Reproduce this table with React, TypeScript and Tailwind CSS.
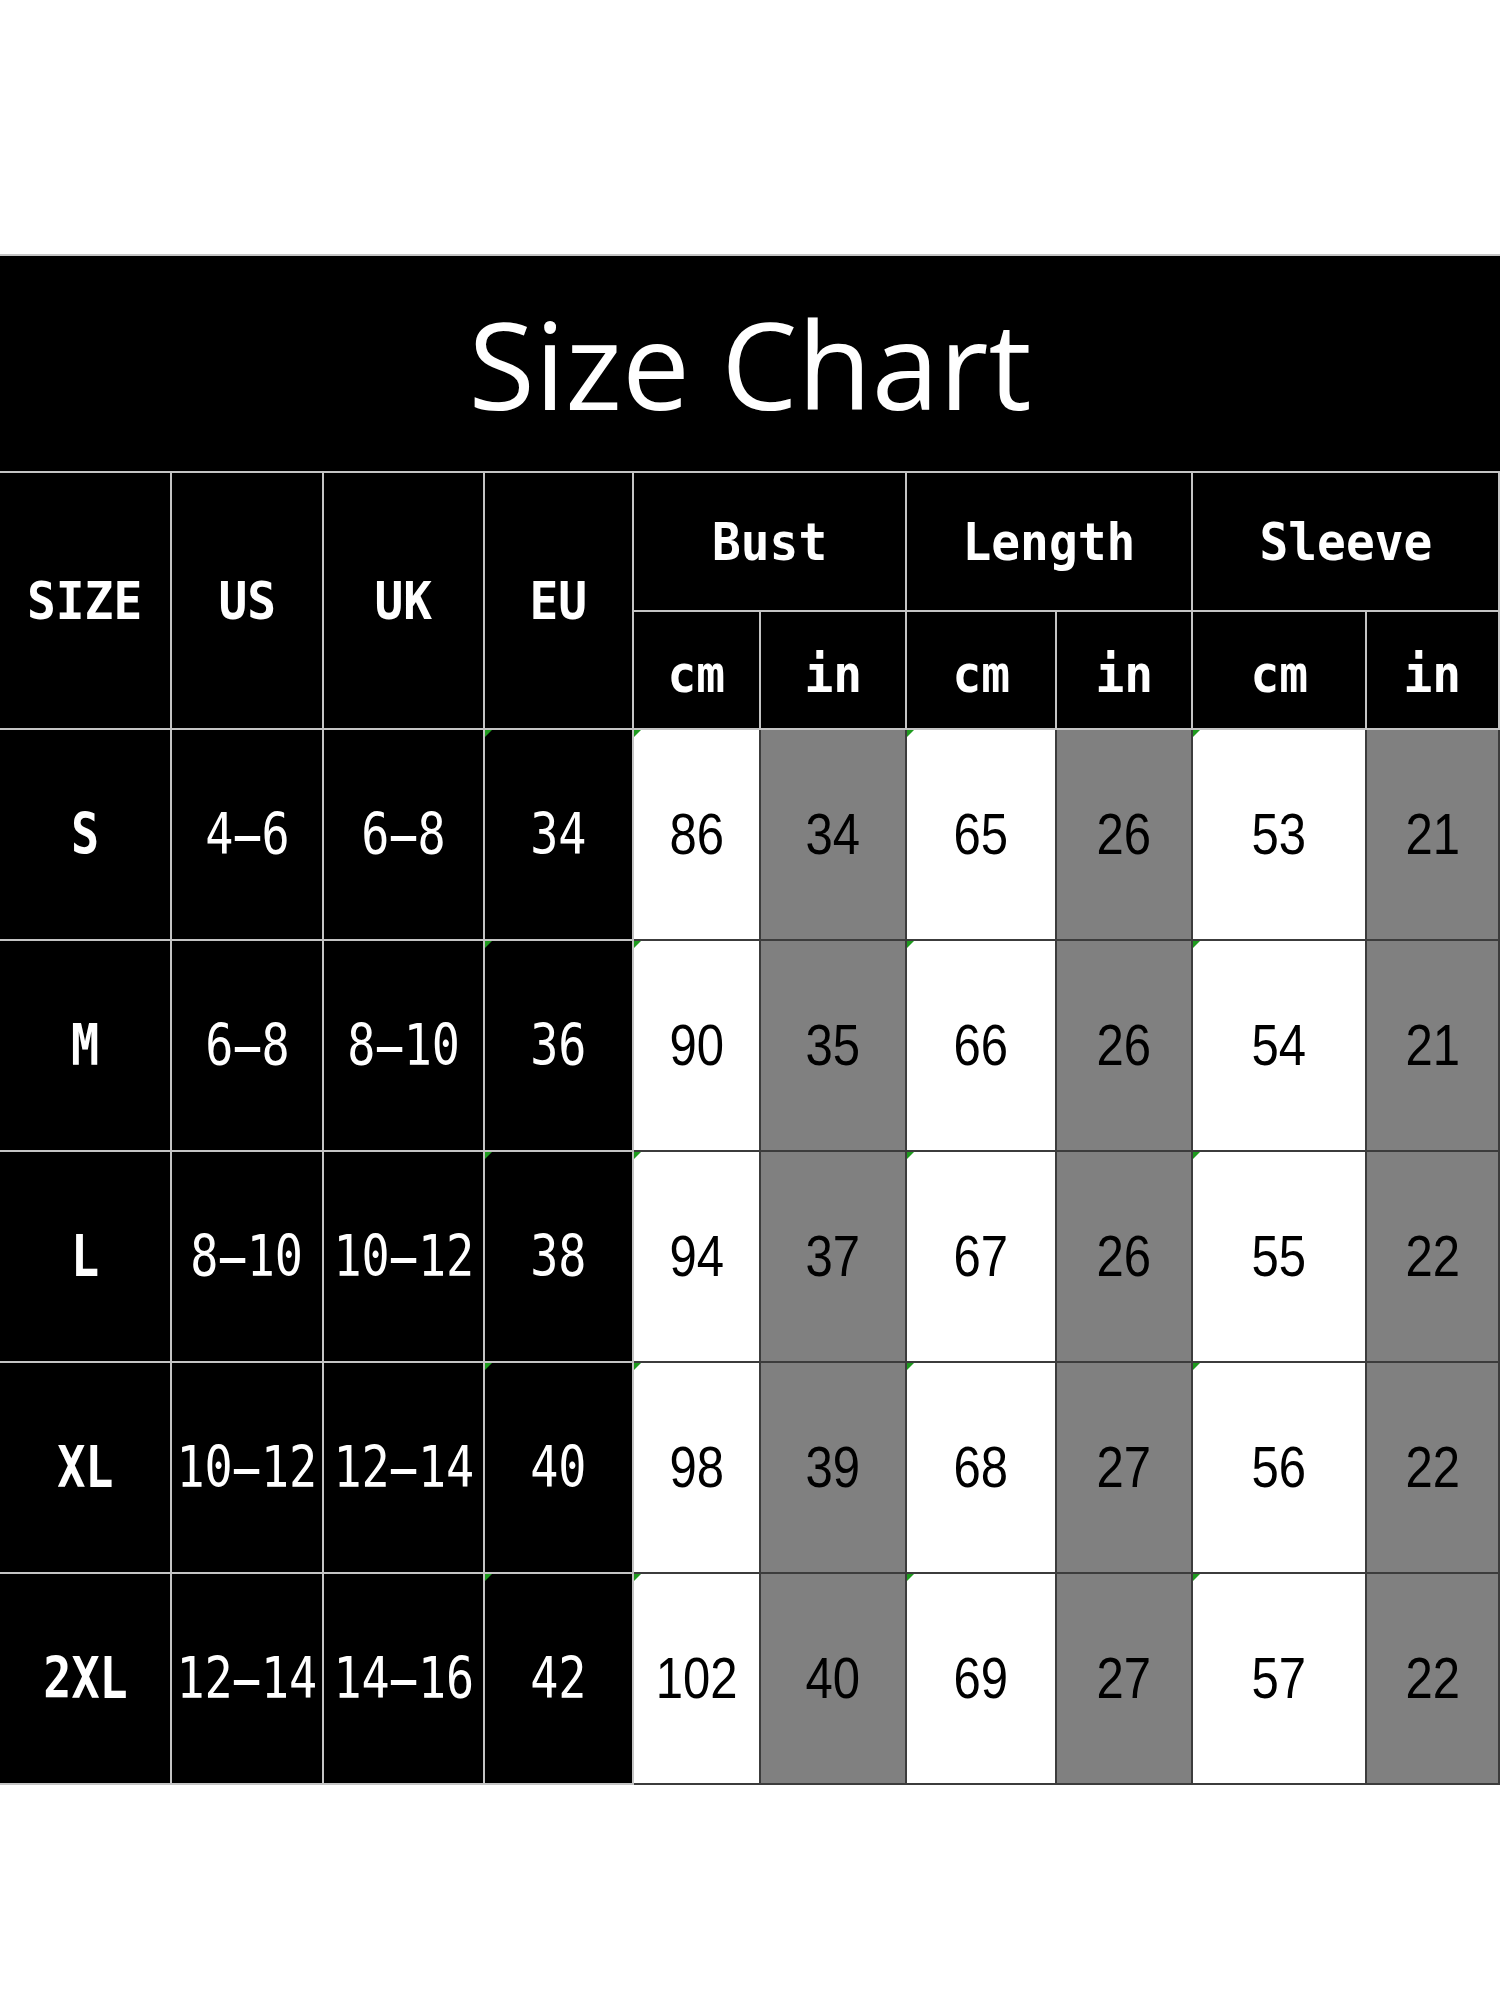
import React from 'react';

const rows = [
  ['S', '4-6', '6-8', '34', '86', '34', '65', '26', '53', '21'],
  ['M', '6-8', '8-10', '36', '90', '35', '66', '26', '54', '21'],
  ['L', '8-10', '10-12', '38', '94', '37', '67', '26', '55', '22'],
  ['XL', '10-12', '12-14', '40', '98', '39', '68', '27', '56', '22'],
  ['2XL', '12-14', '14-16', '42', '102', '40', '69', '27', '57', '22'],
];

const mono = { fontFamily: '"DejaVu Sans Mono", "Liberation Mono", monospace' };
const sans = { fontFamily: '"Liberation Sans", Arial, sans-serif' };

const Mark = () => (
  <span className="absolute left-0 top-0 h-0 w-0 border-t-[7px] border-r-[7px] border-t-[#1f9a1f] border-r-transparent" />
);

// ranges like 10-12: the dash in the chart is drawn wide, so a bar lengthens it
const Range = ({ value }: { value: string }) => {
  const parts = value.split('-');
  if (parts.length < 2) return <>{value}</>;
  return (
    <>
      {parts[0]}
      <span className="relative inline-block">
        -
        <span className="absolute left-[0.03em] right-[0.03em] top-[0.53em] h-[0.08em] bg-white" />
      </span>
      {parts[1]}
    </>
  );
};

const HeadCell = ({ children, className = '' }: { children: React.ReactNode; className?: string }) => (
  <div className={`flex items-center justify-center bg-black border-r-2 border-b-2 border-[#c4c4c4] ${className}`}>
    <span className="inline-block scale-x-[0.92] whitespace-nowrap text-[52px] font-bold leading-none text-white" style={mono}>
      {children}
    </span>
  </div>
);

export default function App() {
  return (
    <div className="h-[2000px] w-[1500px] bg-white pt-[254px]">
      <div className="grid grid-cols-[172px_152px_161px_149px_127px_146px_150px_136px_174px_133px] grid-rows-[217px_139px_118px_211px_211px_211px_211px_211px] border-t-2 border-[#c4c4c4]">
        {/* Title */}
        <div className="col-span-10 flex items-center justify-center bg-black border-b-2 border-[#c4c4c4]">
          <h1 className="text-[121px] font-normal leading-none text-white" style={{ fontFamily: '"Open Sans", "DejaVu Sans", sans-serif' }}>
            Size Chart
          </h1>
        </div>

        {/* Header */}
        <HeadCell className="row-span-2">SIZE</HeadCell>
        <HeadCell className="row-span-2">US</HeadCell>
        <HeadCell className="row-span-2">UK</HeadCell>
        <HeadCell className="row-span-2">EU</HeadCell>
        <HeadCell className="col-span-2">Bust</HeadCell>
        <HeadCell className="col-span-2">Length</HeadCell>
        <HeadCell className="col-span-2">Sleeve</HeadCell>
        {['cm', 'in', 'cm', 'in', 'cm', 'in'].map((u, i) => (
          <HeadCell key={i} className="pt-2">{u}</HeadCell>
        ))}

        {/* Body */}
        {rows.map((r) =>
          r.map((v, i) => {
            if (i < 4) {
              return (
                <div
                  key={r[0] + i}
                  className="relative flex items-center justify-center bg-black border-r-2 border-b-2 border-[#c4c4c4]"
                >
                  {i === 3 && <Mark />}
                  <span
                    className={`inline-block scale-x-[0.82] whitespace-nowrap text-[57px] leading-none text-white ${i === 0 ? 'font-bold' : 'font-normal'}`}
                    style={mono}
                  >
                    <Range value={v} />
                  </span>
                </div>
              );
            }
            const isCm = i % 2 === 0;
            return (
              <div
                key={r[0] + i}
                className={`relative flex items-center justify-center border-r-2 border-b-2 border-[#3c3c3c] ${
                  isCm ? 'bg-white' : 'bg-[#808080]'
                }`}
              >
                {isCm && <Mark />}
                <span className="inline-block scale-x-[0.86] whitespace-nowrap text-[57px] leading-none text-black" style={sans}>
                  {v}
                </span>
              </div>
            );
          })
        )}
      </div>
    </div>
  );
}
